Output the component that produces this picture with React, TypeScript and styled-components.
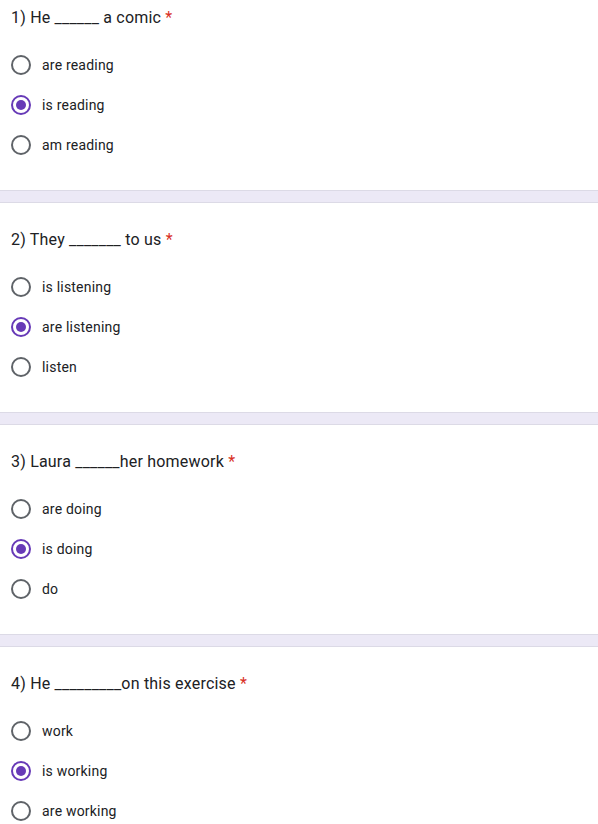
import React from "react";
import styled, { createGlobalStyle } from "styled-components";

const questions = [
  { title: "1) He ______ a comic", options: ["are reading", "is reading", "am reading"], selected: 1 },
  { title: "2) They _______ to us", options: ["is listening", "are listening", "listen"], selected: 1 },
  { title: "3) Laura ______her homework", options: ["are doing", "is doing", "do"], selected: 1 },
  { title: "4) He _________on this exercise", options: ["work", "is working", "are working"], selected: 1 },
];

export default function App() {
  return <>
    <GlobalStyle/>
    <Page>
      {questions.map((q, i) => (
        <React.Fragment key={i}>
          {i > 0 && <Divider/>}
          <Section $first={i === 0}>
            <Title>{q.title} <Star>*</Star></Title>
            <Options>
              {q.options.map((o, j) => (
                <Option key={j}>
                  <Radio $checked={j === q.selected}/>
                  <Label>{o}</Label>
                </Option>
              ))}
            </Options>
          </Section>
        </React.Fragment>
      ))}
    </Page>
  </>
}

const GlobalStyle = createGlobalStyle`
  body {
    margin: 0;
    background: #fff;
    font-family: Roboto, "Liberation Sans", sans-serif;
  }
`

const Page = styled.div`
  width: 598px;
  height: 824px;
  overflow: hidden;
`

const Section = styled.div<{ $first?: boolean }>`
  padding: ${p => p.$first ? 6 : 25}px 0 25px 11px;
  background: #fff;
`

const Divider = styled.div`
  height: 11px;
  background: #ece9f6;
  border-top: 1px solid #dcdae6;
  border-bottom: 1px solid #dcdae6;
`

const Title = styled.div`
  font-size: 16px;
  line-height: 24px;
  color: #202124;
  letter-spacing: 0.2px;
`

const Star = styled.span`
  color: #d93025;
`

const Options = styled.div`
  margin-top: 15px;
`

const Option = styled.div`
  display: flex;
  align-items: center;
  height: 40px;
`

const Radio = styled.span<{ $checked?: boolean }>`
  box-sizing: border-box;
  width: 20px;
  height: 20px;
  border-radius: 50%;
  border: 2px solid ${p => p.$checked ? "#673ab7" : "#5f6368"};
  display: flex;
  align-items: center;
  justify-content: center;
  flex-shrink: 0;
  &::after {
    content: "";
    display: ${p => p.$checked ? "block" : "none"};
    width: 10px;
    height: 10px;
    border-radius: 50%;
    background: #673ab7;
  }
`

const Label = styled.span`
  margin-left: 11px;
  font-size: 14px;
  color: #202124;
  letter-spacing: 0.2px;
`
